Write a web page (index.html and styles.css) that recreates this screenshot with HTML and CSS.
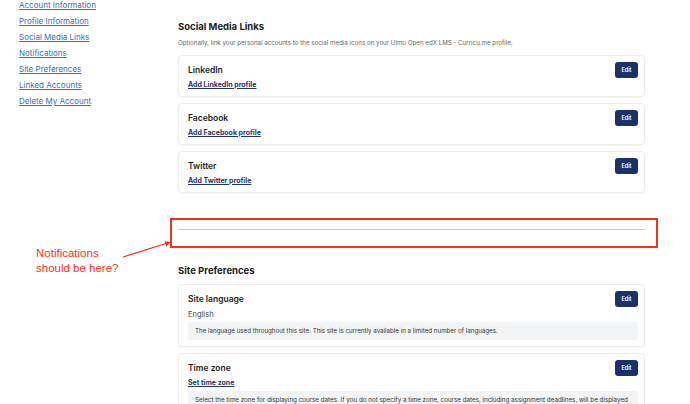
FILE: index.html
```html
<!DOCTYPE html>
<html lang="en">
<head>
  <meta charset="UTF-8">
  <meta name="viewport" content="width=device-width, initial-scale=1.0">
  <title>Account Settings</title>
  <link rel="stylesheet" href="styles.css">
</head>
<body>
  <div class="page">
    <!-- Side navigation -->
    <nav class="sidebar">
      <ul>
        <li><a href="#">Account Information</a></li>
        <li><a href="#">Profile Information</a></li>
        <li><a href="#">Social Media Links</a></li>
        <li><a href="#">Notifications</a></li>
        <li><a href="#">Site Preferences</a></li>
        <li><a href="#">Linked Accounts</a></li>
        <li><a href="#">Delete My Account</a></li>
      </ul>
    </nav>

    <main class="content">
      <!-- Social media -->
      <section>
        <h2>Social Media Links</h2>
        <p class="section-desc">Optionally, link your personal accounts to the social media icons on your Ulmo Open edX LMS - Curricu.me profile.</p>

        <div class="card">
          <div class="card-head">
            <h3>LinkedIn</h3>
            <button class="edit-button">Edit</button>
          </div>
          <a class="card-link" href="#">Add LinkedIn profile</a>
        </div>

        <div class="card">
          <div class="card-head">
            <h3>Facebook</h3>
            <button class="edit-button">Edit</button>
          </div>
          <a class="card-link" href="#">Add Facebook profile</a>
        </div>

        <div class="card">
          <div class="card-head">
            <h3>Twitter</h3>
            <button class="edit-button">Edit</button>
          </div>
          <a class="card-link" href="#">Add Twitter profile</a>
        </div>
      </section>

      <!-- Notifications (empty) -->
      <div class="notifications-slot">
        <hr>
      </div>

      <!-- Site preferences -->
      <section>
        <h2 class="prefs-title">Site Preferences</h2>

        <div class="card">
          <div class="card-head">
            <h3>Site language</h3>
            <button class="edit-button">Edit</button>
          </div>
          <div class="card-value">English</div>
          <div class="card-note">The language used throughout this site. This site is currently available in a limited number of languages.</div>
        </div>

        <div class="card">
          <div class="card-head">
            <h3>Time zone</h3>
            <button class="edit-button">Edit</button>
          </div>
          <a class="card-link" href="#">Set time zone</a>
          <div class="card-note card-note-lg">Select the time zone for displaying course dates. If you do not specify a time zone, course dates, including assignment deadlines, will be displayed in your browser's local time zone.</div>
        </div>
      </section>
    </main>

    <!-- annotation -->
    <div class="callout-text">Notifications<br>should be here?</div>
    <svg class="callout-arrow" width="56" height="26" viewBox="0 0 56 26">
      <line x1="3" y1="21" x2="46" y2="7.5" stroke="#f0321f" stroke-width="1.3"/>
      <polygon points="51,6 44.5,5.2 46.2,10.4" fill="#f0321f"/>
    </svg>
  </div>
</body>
</html>
```

FILE: styles.css
```css
/* General */
body {
  margin: 0;
  font-family: 'Inter', 'Noto Sans', sans-serif;
  background-color: #fff;
  color: #222;
}

.page {
  position: relative;
  display: flex;
  align-items: flex-start;
}

/* Sidebar */
.sidebar {
  width: 178px;
  flex-shrink: 0;
  padding-left: 19px;
  box-sizing: border-box;
}

.sidebar ul {
  list-style: none;
  margin: -3px 0 0;
  padding: 0;
}

.sidebar li {
  font-size: 8px;
  line-height: 16px;
}

.sidebar a {
  color: #3a6db3;
  text-decoration: underline;
}

/* Content */
.content {
  width: 467px;
}

h2 {
  font-size: 9.5px;
  line-height: 12px;
  font-weight: 700;
  color: #1d1d1d;
  margin: 20.5px 0 0;
}

.section-desc {
  font-size: 6.2px;
  line-height: 8px;
  color: #666;
  margin: 6px 0 8px;
}

/* Cards */
.card {
  border: 1px solid #ededed;
  border-radius: 4px;
  box-shadow: 0 1px 2px rgba(0, 0, 0, 0.04);
  padding: 6px 6px 6px 9px;
  margin-bottom: 6px;
}

.card-head {
  display: flex;
  justify-content: space-between;
  align-items: flex-start;
}

.card h3 {
  font-size: 8.5px;
  line-height: 12px;
  font-weight: 600;
  color: #1d1d1d;
  margin: 2px 0 0;
}

.edit-button {
  width: 23px;
  height: 16px;
  padding: 0;
  border: none;
  border-radius: 3px;
  background-color: #1c3266;
  color: #fff;
  font-family: inherit;
  font-size: 5.5px;
  font-weight: 600;
  cursor: pointer;
}

.card-link {
  display: block;
  margin-top: 2px;
  font-size: 7px;
  line-height: 10px;
  font-weight: 700;
  color: #1f3566;
  text-decoration: underline;
}

.card-value {
  margin-top: 2.5px;
  font-size: 7.5px;
  line-height: 10px;
  color: #444;
}

.card-note {
  margin-top: 2.5px;
  padding: 5px 7px;
  border-radius: 3px;
  background-color: #f2f4f5;
  font-size: 6.2px;
  line-height: 8px;
  color: #333;
}

.card-note-lg {
  font-size: 6.25px;
  line-height: 9px;
}

/* Empty notifications block, marked by the red box */
.notifications-slot {
  margin: 25px -13px 0 -8px;
  border: 2px solid #f0321f;
  padding: 9px 11px 16px 6px;
}

.notifications-slot hr {
  margin: 0;
  border: none;
  border-top: 1px solid #c9c9c9;
}

.prefs-title {
  margin-top: 17px;
  margin-bottom: 7.5px;
}

/* Annotation */
.callout-text {
  position: absolute;
  left: 36px;
  top: 246px;
  font-family: 'Liberation Sans', Arial, sans-serif;
  font-size: 11.5px;
  line-height: 15px;
  color: #f0321f;
}

.callout-arrow {
  position: absolute;
  left: 120px;
  top: 236px;
}
```
